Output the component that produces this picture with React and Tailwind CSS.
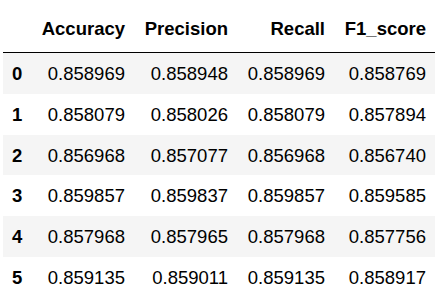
import React from "react";

const cols = ["Accuracy", "Precision", "Recall", "F1_score"];

const rows = [
  ["0.858969", "0.858948", "0.858969", "0.858769"],
  ["0.858079", "0.858026", "0.858079", "0.857894"],
  ["0.856968", "0.857077", "0.856968", "0.856740"],
  ["0.859857", "0.859837", "0.859857", "0.859585"],
  ["0.857968", "0.857965", "0.857968", "0.857756"],
  ["0.859135", "0.859011", "0.859135", "0.858917"],
];

const widths = ["w-[103px]", "w-[103px]", "w-[97px]", "w-[101px]"];
const heights = ["h-[41px]", "h-[41px]", "h-[40px]", "h-[41px]", "h-[41px]", "h-[41px]"];

export default function App() {
  return (
    <div
      className="min-h-screen bg-white pl-[3px] text-[18.5px] leading-[21px] text-black"
      style={{ fontFamily: '"Liberation Sans", Arial, sans-serif' }}
    >
      <div className="w-[432px]">
        {/* header */}
        <div className="flex h-[53px] items-end border-b border-black pb-[13px] font-bold">
          <div className="w-[28px]" />
          {cols.map((c, i) => (
            <div key={c} className={`${widths[i]} pr-[9px] text-right`}>
              {c}
            </div>
          ))}
        </div>

        {/* rows */}
        {rows.map((r, ri) => (
          <div
            key={ri}
            className={`flex items-center ${heights[ri]} ${ri % 2 === 0 ? "bg-[#f5f5f5]" : "bg-white"}`}
          >
            <div className="w-[28px] pl-[9px] font-bold">{ri}</div>
            {r.map((v, ci) => (
              <div key={ci} className={`${widths[ci]} pr-[9px] text-right`}>
                {v}
              </div>
            ))}
          </div>
        ))}
      </div>
    </div>
  );
}
